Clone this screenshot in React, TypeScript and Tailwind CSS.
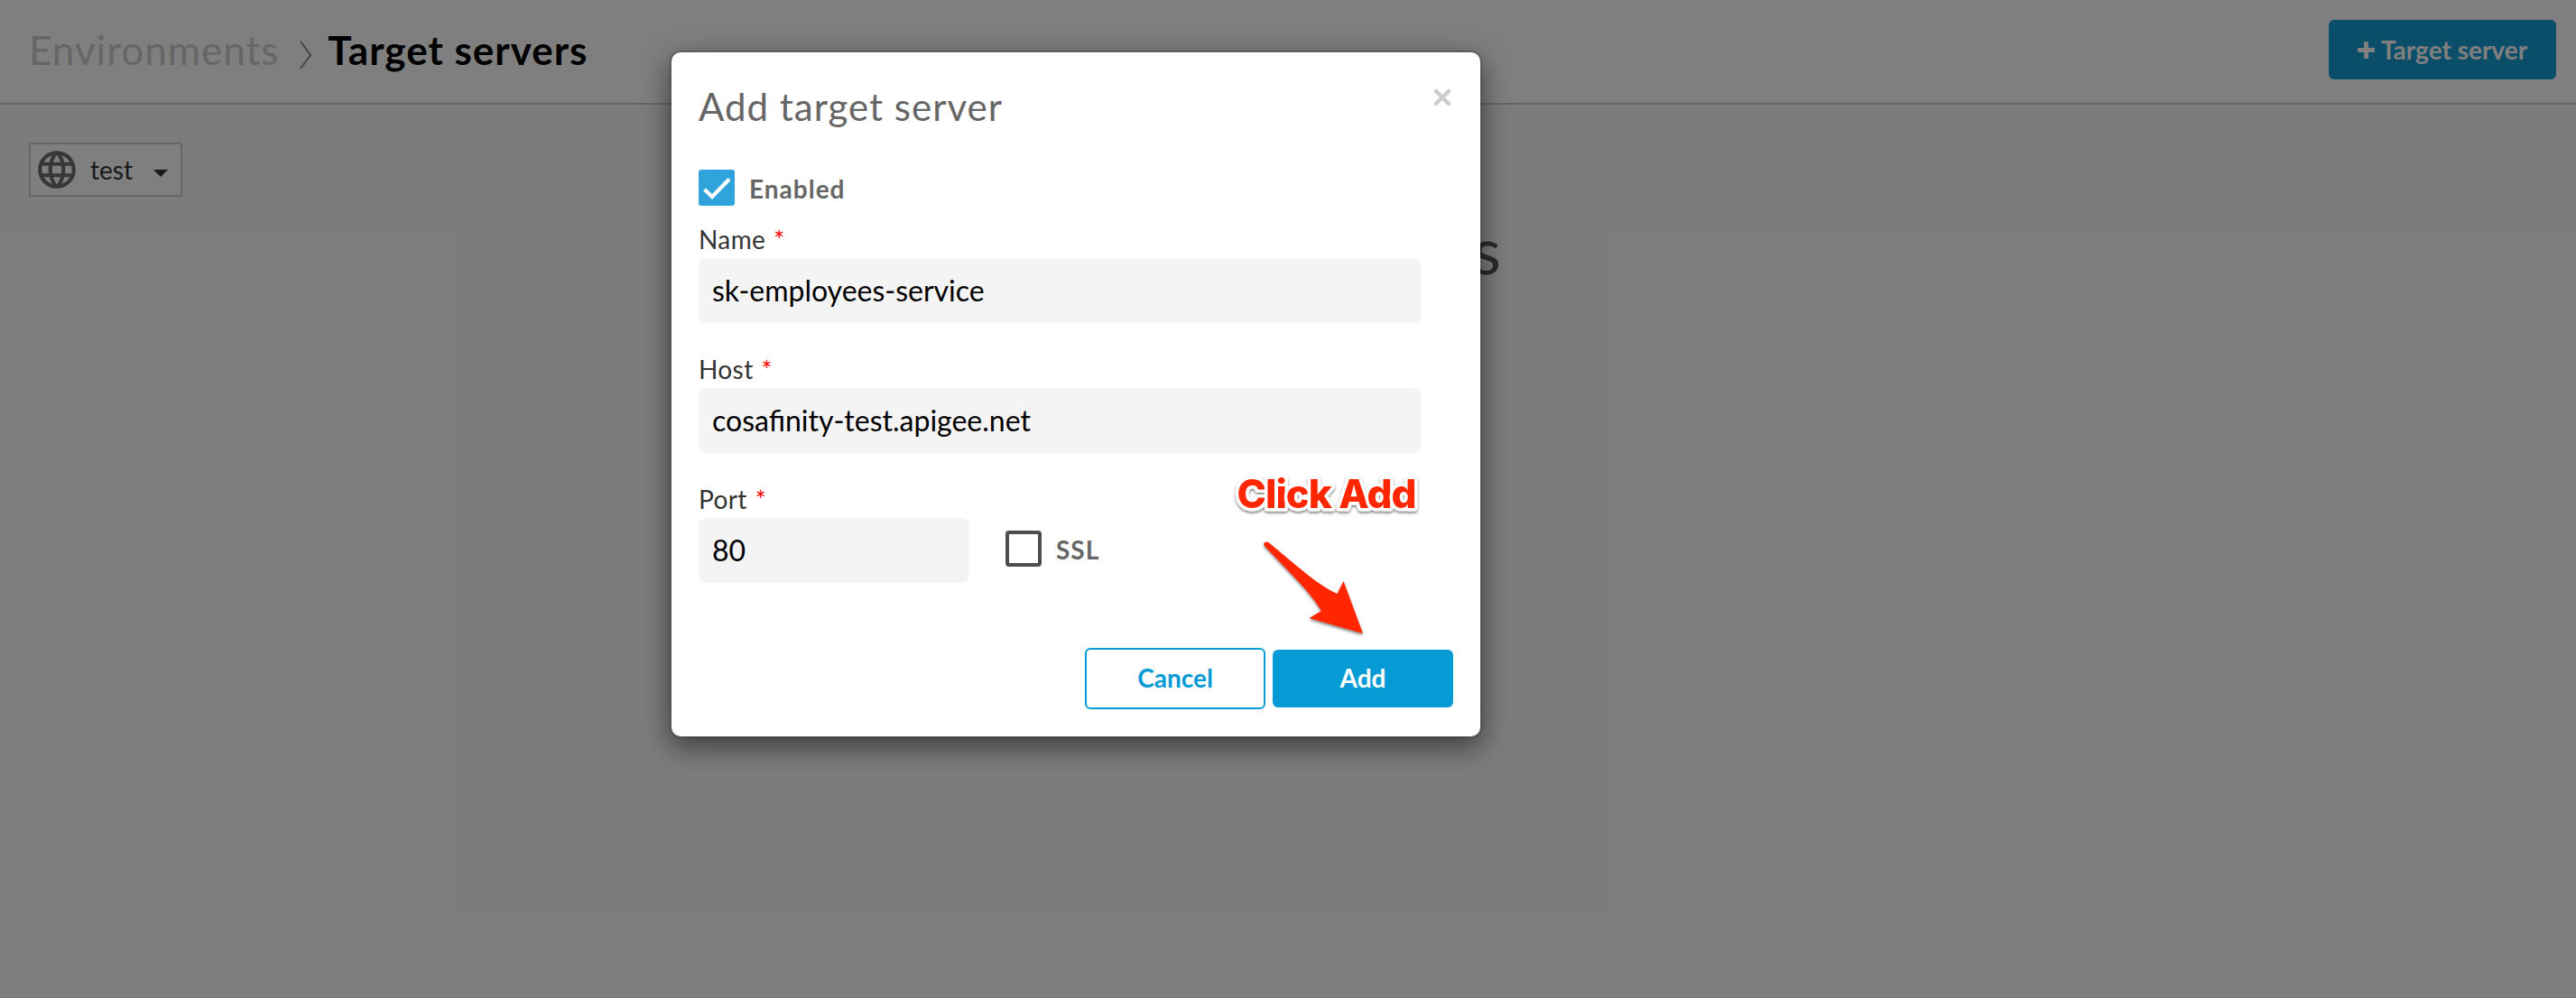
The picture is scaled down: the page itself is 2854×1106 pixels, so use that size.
import React from "react";
import { MdLanguage } from "react-icons/md";

function FieldLabel({ children }: { children: React.ReactNode }) {
  return (
    <div className="flex h-[34px] items-center gap-[9px] text-[28px] leading-[34px] tracking-[0.4px] text-[#333]">
      <span>{children}</span>
      <span className="pt-px text-[#ff0000]">*</span>
    </div>
  );
}

function Header() {
  return (
    <header className="flex h-[116px] items-center justify-between border-b-2 border-[#ccc] bg-white pr-[22px] pl-8">
      <div className="flex items-center pb-1 text-[44px] leading-[54px] tracking-[1px] whitespace-nowrap">
        <span className="text-[#ccc]">Environments</span>
        <svg className="mt-3 ml-[22px] h-[34px] w-4" viewBox="0 0 16 34" fill="none" stroke="#8a8a8a" strokeWidth="2">
          <path d="M2 2 L13 17 L2 32" />
        </svg>
        <span className="ml-4 font-bold text-black">Target servers</span>
      </div>
      <button className="mb-1 flex h-[66px] w-[252px] items-center justify-center gap-[7px] rounded-[6px] bg-[#169dd2] text-[28px] font-bold whitespace-nowrap text-white">
        <svg className="size-[19px]" viewBox="0 0 19 19" fill="currentColor">
          <path d="M8 0h3a1 1 0 0 1 1 1v6h6a1 1 0 0 1 1 1v3a1 1 0 0 1-1 1h-6v6a1 1 0 0 1-1 1H8a1 1 0 0 1-1-1v-6H1a1 1 0 0 1-1-1V8a1 1 0 0 1 1-1h6V1a1 1 0 0 1 1-1z" />
        </svg>
        <span>Target server</span>
      </button>
    </header>
  );
}

function ClickAddNote() {
  return (
    <div className="pointer-events-none absolute top-[460px] left-[620px] h-[160px] w-[230px]">
      <svg className="size-full overflow-visible" viewBox="0 0 230 160">
        <defs>
          <filter id="soft" x="-20%" y="-20%" width="140%" height="150%">
            <feDropShadow dx="0" dy="2" stdDeviation="1.5" floodColor="#000" floodOpacity="0.5" />
          </filter>
        </defs>
        <text
          x="6.500"
          y="45"
          textLength="199"
          fontFamily="Inter, sans-serif"
          fontWeight="800"
          fontSize="44"
          fill="#ff2600"
          stroke="#fff"
          strokeWidth="7"
          strokeLinejoin="round"
          paintOrder="stroke"
          filter="url(#soft)"
        >
          Click Add
        </text>
        <path
          filter="url(#soft)"
          fill="#ff2600"
          d="M36.5 84 C38 82 40.500 82 42.500 84 L73 109.500 C88 122 102 133 117.500 140 L124.500 126 L146 184 L86.500 167 L100 159 C92 145 80 132 68 119.500 L37.500 87.500 C36.300 86.300 36 85 36.500 84 Z"
        />
      </svg>
    </div>
  );
}

function AddServerDialog() {
  return (
    <section className="absolute top-[56px] left-[742px] h-[762px] w-[900px] rounded-[12px] border-2 border-black/20 bg-white bg-clip-padding pt-[35px] pr-[30px] pl-[30px] shadow-[0_10px_30px_rgba(0,0,0,0.5)]">
      <div className="flex items-start justify-between">
        <h2 className="text-[42px] leading-[50px] tracking-[1px] whitespace-nowrap text-[#666]">Add target server</h2>
        <svg className="mt-[5px] mr-[2px] size-5" viewBox="0 0 20 20" stroke="#ccc" strokeWidth="4.400">
          <path d="M1.700 1.700 L18.300 18.300 M18.300 1.700 L1.700 18.300" />
        </svg>
      </div>

      <div className="mt-[45px] flex h-10 items-center gap-[16px]">
        <span className="flex size-10 items-center justify-center rounded-[3px] bg-[#30a3dc]">
          <svg className="size-10" viewBox="0 0 40 40" fill="none" stroke="#fff" strokeWidth="4.200">
            <path d="M6.500 22 L15 30 L34 10.500" />
          </svg>
        </span>
        <span className="pt-[2px] text-[28px] font-bold tracking-[1px] text-[#666]">Enabled</span>
      </div>

      <div className="mt-5">
        <FieldLabel>Name</FieldLabel>
        <div className="mt-1 flex h-[72px] w-[800px] items-center rounded-[8px] bg-[#f4f4f4] px-[15px] text-[32px] text-black">
          sk-employees-service
        </div>
      </div>

      <div className="mt-[34px]">
        <FieldLabel>Host</FieldLabel>
        <div className="mt-1 flex h-[72px] w-[800px] items-center rounded-[8px] bg-[#f4f4f4] px-[15px] text-[32px] text-black">
          cosafinity-test.apigee.net
        </div>
      </div>

      <div className="mt-[34px]">
        <FieldLabel>Port</FieldLabel>
        <div className="mt-1 flex">
          <div className="flex h-[72px] w-[300px] items-center rounded-[8px] bg-[#f4f4f4] px-[15px] text-[32px] text-black">80</div>
          <div className="mt-[14px] ml-10 flex h-10 items-center gap-4">
            <span className="size-10 rounded-[4px] border-4 border-[#4d4d4d]" />
            <span className="pt-[2px] text-[28px] font-bold tracking-[1px] text-[#666]">SSL</span>
          </div>
        </div>
      </div>

      <div className="mt-[72px] flex items-center justify-end gap-2 text-[28px] font-bold">
        <button className="h-[68px] w-[200px] rounded-[6px] border-2 border-[#079bd5] bg-white pb-[2px] text-[#079bd5]">Cancel</button>
        <button className="h-[64px] w-[200px] rounded-[6px] bg-[#079bd5] pb-[2px] text-white">Add</button>
      </div>

      <ClickAddNote />
    </section>
  );
}

export default function App() {
  return (
    <div className="relative h-[1106px] w-[2854px] overflow-hidden bg-[#f9f9f9] font-['Lato',sans-serif]">
      <Header />
      <main className="flex items-start pt-[42px] pl-8">
        <div className="flex h-[60px] w-[170px] items-center border-2 border-[#ccc] bg-white pl-1 text-[28px] text-[#333]">
          <MdLanguage className="size-[50px] text-[#6f6f6f]" />
          <span className="ml-3 pb-px">test</span>
          <svg className="mt-2 ml-[23px] h-2 w-4" viewBox="0 0 16 8" fill="#333">
            <path d="M0 0h16L8 8z" />
          </svg>
        </div>
        <h1 className="mt-[75px] w-[1461px] text-right text-[72px] leading-[86px] text-[#555]">No target servers</h1>
      </main>
      <div className="absolute inset-0 bg-black/50" />
      <AddServerDialog />
    </div>
  );
}
